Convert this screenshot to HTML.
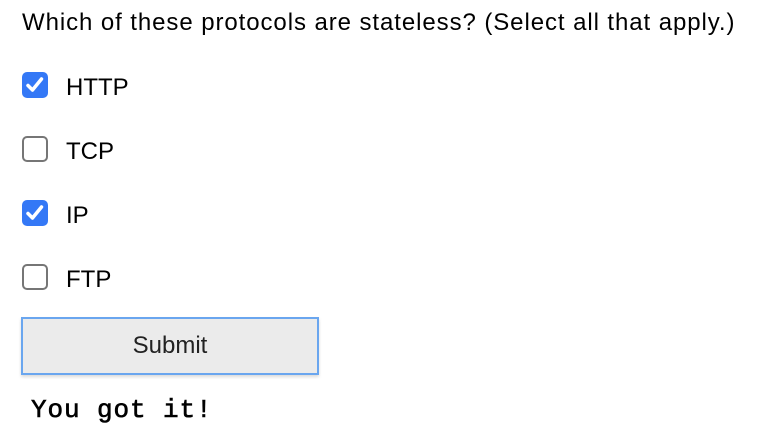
<!DOCTYPE html>
<html><head><style>
body{margin:0;width:766px;height:444px;background:#fff;font-family:"Liberation Sans",Arial,sans-serif;color:#000;position:relative;overflow:hidden}
.t{position:absolute;left:22px;top:9px;font-size:24px;letter-spacing:0.92px;white-space:nowrap}
.cb{position:absolute;left:22px;width:26px;height:26px;box-sizing:border-box;border-radius:5px}
.on{background:#3478f6}
.off{border:2px solid #767676;background:#fff}
.l{position:absolute;left:66px;font-size:24px}
.btn{position:absolute;left:21px;top:317px;width:298px;height:58px;box-sizing:border-box;border:2px solid #6aa6ef;background:#ebebeb;font-size:24px;text-align:center;line-height:54px;color:#222;box-shadow:0 2px 3px rgba(0,0,0,.15)}
.m{position:absolute;left:31px;top:395px;font-family:"Liberation Mono","Courier New",monospace;font-size:26px;letter-spacing:0.9px;-webkit-text-stroke:0.6px #000}
</style></head><body>
<div class="t">Which of these protocols are stateless? (Select all that apply.)</div>
<div class="cb on" style="top:72px"><svg width="26" height="26"><path d="M6 13.5l4.5 4.5 9-11" stroke="#fff" stroke-width="3.5" fill="none" stroke-linecap="round" stroke-linejoin="round"/></svg></div>
<div class="l" style="top:74px">HTTP</div>
<div class="cb off" style="top:136px"></div>
<div class="l" style="top:138px">TCP</div>
<div class="cb on" style="top:200px"><svg width="26" height="26"><path d="M6 13.5l4.5 4.5 9-11" stroke="#fff" stroke-width="3.5" fill="none" stroke-linecap="round" stroke-linejoin="round"/></svg></div>
<div class="l" style="top:202px">IP</div>
<div class="cb off" style="top:264px"></div>
<div class="l" style="top:266px">FTP</div>
<div class="btn">Submit</div>
<div class="m">You got it!</div>
</body></html>
